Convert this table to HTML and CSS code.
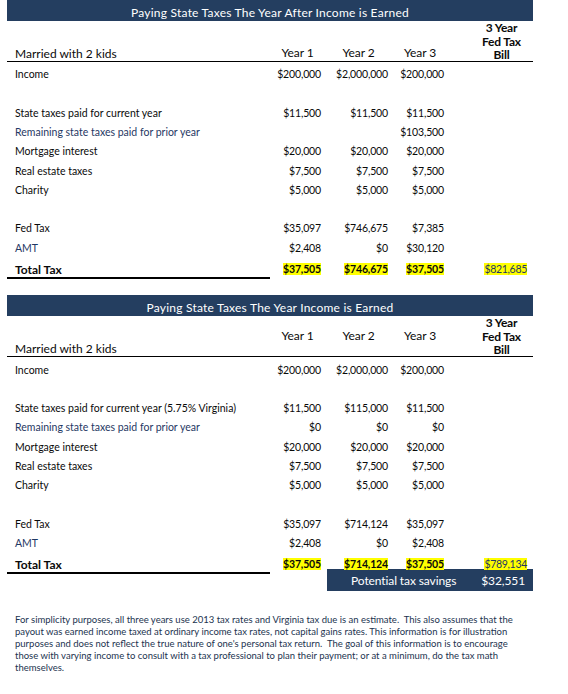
FILE: index.html
```html
<!DOCTYPE html>
<html lang="en">
<head>
<meta charset="utf-8">
<title>Paying State Taxes</title>
<link rel="stylesheet" href="styles.css">
</head>
<body>
<div class="sheet">

  <section class="block">
    <div class="bar-title">Paying State Taxes The Year After Income is Earned</div>
    <div class="grid">
      <div class="hd-label">Married with 2 kids</div>
      <div class="hd-year end">Year 1</div>
      <div class="hd-year end">Year 2</div>
      <div class="hd-year end">Year 3</div>
      <div class="hd-gap"></div>
      <div class="hd-bill">3 Year<br>Fed Tax<br>Bill</div>

      <div class="lbl first">Income</div><div class="val first">$200,000</div><div class="val first">$2,000,000</div><div class="val first">$200,000</div><div class="gap first"></div><div class="bill first"></div>
      <div class="blank"></div>
      <div class="lbl">State taxes paid for current year</div><div class="val">$11,500</div><div class="val">$11,500</div><div class="val">$11,500</div><div class="gap"></div><div class="bill"></div>
      <div class="lbl navy">Remaining state taxes paid for prior year</div><div class="val"></div><div class="val"></div><div class="val">$103,500</div><div class="gap"></div><div class="bill"></div>
      <div class="lbl">Mortgage interest</div><div class="val">$20,000</div><div class="val">$20,000</div><div class="val">$20,000</div><div class="gap"></div><div class="bill"></div>
      <div class="lbl">Real estate taxes</div><div class="val">$7,500</div><div class="val">$7,500</div><div class="val">$7,500</div><div class="gap"></div><div class="bill"></div>
      <div class="lbl">Charity</div><div class="val">$5,000</div><div class="val">$5,000</div><div class="val">$5,000</div><div class="gap"></div><div class="bill"></div>
      <div class="blank"></div>
      <div class="lbl">Fed Tax</div><div class="val">$35,097</div><div class="val">$746,675</div><div class="val">$7,385</div><div class="gap"></div><div class="bill"></div>
      <div class="lbl navy">AMT</div><div class="val">$2,408</div><div class="val">$0</div><div class="val">$30,120</div><div class="gap"></div><div class="bill"></div>
      <div class="lbl total">Total Tax</div><div class="val total"><span class="hl">$37,505</span></div><div class="val total"><span class="hl">$746,675</span></div><div class="val total"><span class="hl">$37,505</span></div><div class="gap"></div><div class="bill total-bill"><span class="hl">$821,685</span></div>
    </div>
  </section>

  <section class="block second">
    <div class="bar-title">Paying State Taxes The Year Income is Earned</div>
    <div class="grid">
      <div class="hd-label">Married with 2 kids</div>
      <div class="hd-year mid">Year 1</div>
      <div class="hd-year mid">Year 2</div>
      <div class="hd-year mid">Year 3</div>
      <div class="hd-gap"></div>
      <div class="hd-bill">3 Year<br>Fed Tax<br>Bill</div>

      <div class="lbl first">Income</div><div class="val first">$200,000</div><div class="val first">$2,000,000</div><div class="val first">$200,000</div><div class="gap first"></div><div class="bill first"></div>
      <div class="blank"></div>
      <div class="lbl">State taxes paid for current year (5.75% Virginia)</div><div class="val">$11,500</div><div class="val">$115,000</div><div class="val">$11,500</div><div class="gap"></div><div class="bill"></div>
      <div class="lbl navy">Remaining state taxes paid for prior year</div><div class="val">$0</div><div class="val">$0</div><div class="val">$0</div><div class="gap"></div><div class="bill"></div>
      <div class="lbl">Mortgage interest</div><div class="val">$20,000</div><div class="val">$20,000</div><div class="val">$20,000</div><div class="gap"></div><div class="bill"></div>
      <div class="lbl">Real estate taxes</div><div class="val">$7,500</div><div class="val">$7,500</div><div class="val">$7,500</div><div class="gap"></div><div class="bill"></div>
      <div class="lbl">Charity</div><div class="val">$5,000</div><div class="val">$5,000</div><div class="val">$5,000</div><div class="gap"></div><div class="bill"></div>
      <div class="blank"></div>
      <div class="lbl">Fed Tax</div><div class="val">$35,097</div><div class="val">$714,124</div><div class="val">$35,097</div><div class="gap"></div><div class="bill"></div>
      <div class="lbl navy">AMT</div><div class="val">$2,408</div><div class="val">$0</div><div class="val">$2,408</div><div class="gap"></div><div class="bill"></div>
      <div class="lbl total">Total Tax</div><div class="val total"><span class="hl">$37,505</span></div><div class="val total"><span class="hl">$714,124</span></div><div class="val total"><span class="hl">$37,505</span></div><div class="gap"></div><div class="bill total-bill"><span class="hl">$789,134</span></div>
    </div>
    <div class="savings">
      <span class="savings-label">Potential tax savings</span>
      <span class="savings-value">$32,551</span>
    </div>
  </section>

  <p class="note">For simplicity purposes, all three years use 2013 tax rates and Virginia tax due is an estimate.&nbsp; This also assumes that the<br>payout was earned income taxed at ordinary income tax rates, not capital gains rates. This information is for illustration<br>purposes and does not reflect the true nature of one's personal tax return.&nbsp; The goal of this information is to encourage<br>those with varying income to consult with a tax professional to plan their payment; or at a minimum, do the tax math<br>themselves.</p>

</div>
</body>
</html>
```

FILE: styles.css
```css
* {
  box-sizing: border-box;
}

body {
  margin: 0;
  background: #ffffff;
  font-family: Lato, "Open Sans", sans-serif;
  color: #0a0a0a;
}

.sheet {
  width: 568px;
  padding: 0 35px 0 7px;
}

.block.second {
  margin-top: 18px;
}

.bar-title {
  height: 21px;
  padding-top: 5px;
  line-height: 16px;
  background: #243e60;
  color: #ffffff;
  font-size: 12px;
  text-align: center;
  letter-spacing: 0.22px;
}

.grid {
  display: grid;
  grid-template-columns: 263px 55px 67px 56px 22px 63px;
  grid-template-rows: 41px 22.65px;
  grid-auto-rows: 19.25px;
}

.hd-label,
.hd-year,
.hd-gap,
.hd-bill {
  border-bottom: 1px solid #000000;
}

.hd-label {
  display: flex;
  align-items: flex-end;
  padding-left: 8px;
  padding-bottom: 0;
  font-size: 12px;
  line-height: 14px;
}

.hd-year {
  display: flex;
  justify-content: center;
  font-size: 12px;
  line-height: 14px;
  letter-spacing: -0.1px;
}

.hd-year.end {
  align-items: flex-end;
  padding-bottom: 1px;
}

.hd-year.mid {
  align-items: center;
}

.hd-bill {
  font-size: 12px;
  font-weight: 700;
  line-height: 13.5px;
  text-align: center;
  letter-spacing: -0.2px;
}

.lbl,
.val,
.gap,
.bill {
  font-size: 10.5px;
  line-height: 19.25px;
  white-space: nowrap;
}

.first {
  padding-top: 3.4px;
}

.lbl {
  padding-left: 8px;
}

.val {
  text-align: right;
  padding-right: 4px;
  letter-spacing: -0.15px;
}

.bill {
  text-align: right;
  padding-right: 6px;
}

.navy {
  color: #1f3864;
}

.blank {
  grid-column: 1 / -1;
}

.total {
  font-weight: 700;
  padding-top: 3px;
  line-height: 17px;
  height: 21px;
}

.lbl.total {
  font-size: 12px;
  border-bottom: 2px solid #000000;
}

.total-bill {
  padding-top: 3px;
  line-height: 17px;
  color: #1f3864;
  letter-spacing: -0.3px;
}

.hl {
  background: #ffff00;
}

.savings {
  display: flex;
  justify-content: space-between;
  align-items: center;
  margin-left: 320px;
  width: 206px;
  height: 22px;
  margin-top: -3px;
  padding: 1px 8px 0 24px;
  background: #243e60;
  color: #ffffff;
  font-size: 12px;
  letter-spacing: -0.1px;
}

.note {
  margin: 23px 0 0 0;
  padding-left: 8px;
  font-size: 9.5px;
  line-height: 12px;
  color: #22334f;
  white-space: nowrap;
}
```
